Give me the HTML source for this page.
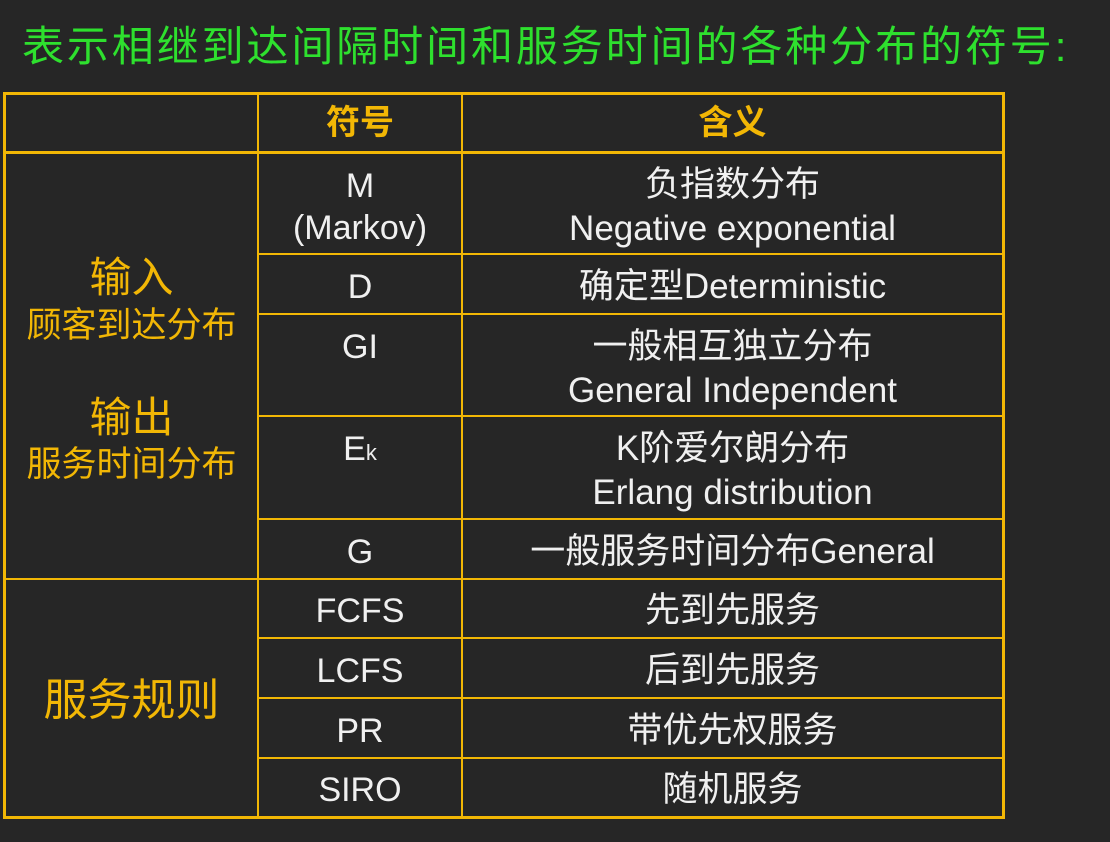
<!DOCTYPE html>
<html><head><meta charset="utf-8"><style>
body{margin:0;width:1110px;height:842px;background:#262626;overflow:hidden;position:relative;font-family:"Liberation Sans","Noto Sans CJK SC",sans-serif;}
.t{position:absolute;white-space:nowrap;text-align:center;line-height:1;}
.h{position:absolute;background:#f2b705;}
.w{color:#f0f0f0;font-size:34px;}
.y{color:#f2b705;}
</style></head><body>
<div class="t" style="left:22px;top:26px;font-size:42px;color:#2ee02e;letter-spacing:2.9px">表示相继到达间隔时间和服务时间的各种分布的符号:</div>
<div class="h" style="left:4px;top:92px;width:1001px;height:3px"></div>
<div class="h" style="left:4px;top:151px;width:1001px;height:3px"></div>
<div class="h" style="left:258px;top:253px;width:747px;height:2px"></div>
<div class="h" style="left:258px;top:313px;width:747px;height:2px"></div>
<div class="h" style="left:258px;top:415px;width:747px;height:2px"></div>
<div class="h" style="left:258px;top:518px;width:747px;height:2px"></div>
<div class="h" style="left:4px;top:578px;width:1001px;height:2px"></div>
<div class="h" style="left:258px;top:637px;width:747px;height:2px"></div>
<div class="h" style="left:258px;top:697px;width:747px;height:2px"></div>
<div class="h" style="left:258px;top:757px;width:747px;height:2px"></div>
<div class="h" style="left:4px;top:816px;width:1001px;height:3px"></div>
<div class="h" style="left:3px;top:92px;width:3px;height:727px"></div>
<div class="h" style="left:257px;top:92px;width:2px;height:727px"></div>
<div class="h" style="left:461px;top:92px;width:2px;height:727px"></div>
<div class="h" style="left:1002px;top:92px;width:3px;height:727px"></div>
<div class="t y" style="left:259px;width:202px;top:106px;font-size:34px;font-weight:bold">符号</div>
<div class="t y" style="left:463px;width:539px;top:106px;font-size:34px;font-weight:bold">含义</div>
<div class="t y" style="left:6px;width:251px;top:257px;font-size:42px">输入</div>
<div class="t y" style="left:6px;width:251px;top:308px;font-size:35px">顾客到达分布</div>
<div class="t y" style="left:6px;width:251px;top:397px;font-size:42px">输出</div>
<div class="t y" style="left:6px;width:251px;top:447px;font-size:35px">服务时间分布</div>
<div class="t y" style="left:6px;width:251px;top:679px;font-size:44px">服务规则</div>
<div class="t w" style="left:259px;width:202px;top:169px">M</div>
<div class="t w" style="left:259px;width:202px;top:211px">(Markov)</div>
<div class="t w" style="left:259px;width:202px;top:270px">D</div>
<div class="t w" style="left:259px;width:202px;top:330px">GI</div>
<div class="t w" style="left:259px;width:202px;top:432px">E<span style="font-size:22px">k</span></div>
<div class="t w" style="left:259px;width:202px;top:535px">G</div>
<div class="t w" style="left:259px;width:202px;top:594px">FCFS</div>
<div class="t w" style="left:259px;width:202px;top:654px">LCFS</div>
<div class="t w" style="left:259px;width:202px;top:714px">PR</div>
<div class="t w" style="left:259px;width:202px;top:773px">SIRO</div>
<div class="t w" style="left:463px;width:539px;top:167px;font-size:35px">负指数分布</div>
<div class="t w" style="left:463px;width:539px;top:211px;font-size:35px">Negative exponential</div>
<div class="t w" style="left:463px;width:539px;top:269px;font-size:35px">确定型Deterministic</div>
<div class="t w" style="left:463px;width:539px;top:329px;font-size:35px">一般相互独立分布</div>
<div class="t w" style="left:463px;width:539px;top:373px;font-size:35px">General Independent</div>
<div class="t w" style="left:463px;width:539px;top:431px;font-size:35px">K阶爱尔朗分布</div>
<div class="t w" style="left:463px;width:539px;top:475px;font-size:35px">Erlang distribution</div>
<div class="t w" style="left:463px;width:539px;top:534px;font-size:35px">一般服务时间分布General</div>
<div class="t w" style="left:463px;width:539px;top:593px;font-size:35px">先到先服务</div>
<div class="t w" style="left:463px;width:539px;top:653px;font-size:35px">后到先服务</div>
<div class="t w" style="left:463px;width:539px;top:713px;font-size:35px">带优先权服务</div>
<div class="t w" style="left:463px;width:539px;top:772px;font-size:35px">随机服务</div>
</body></html>
